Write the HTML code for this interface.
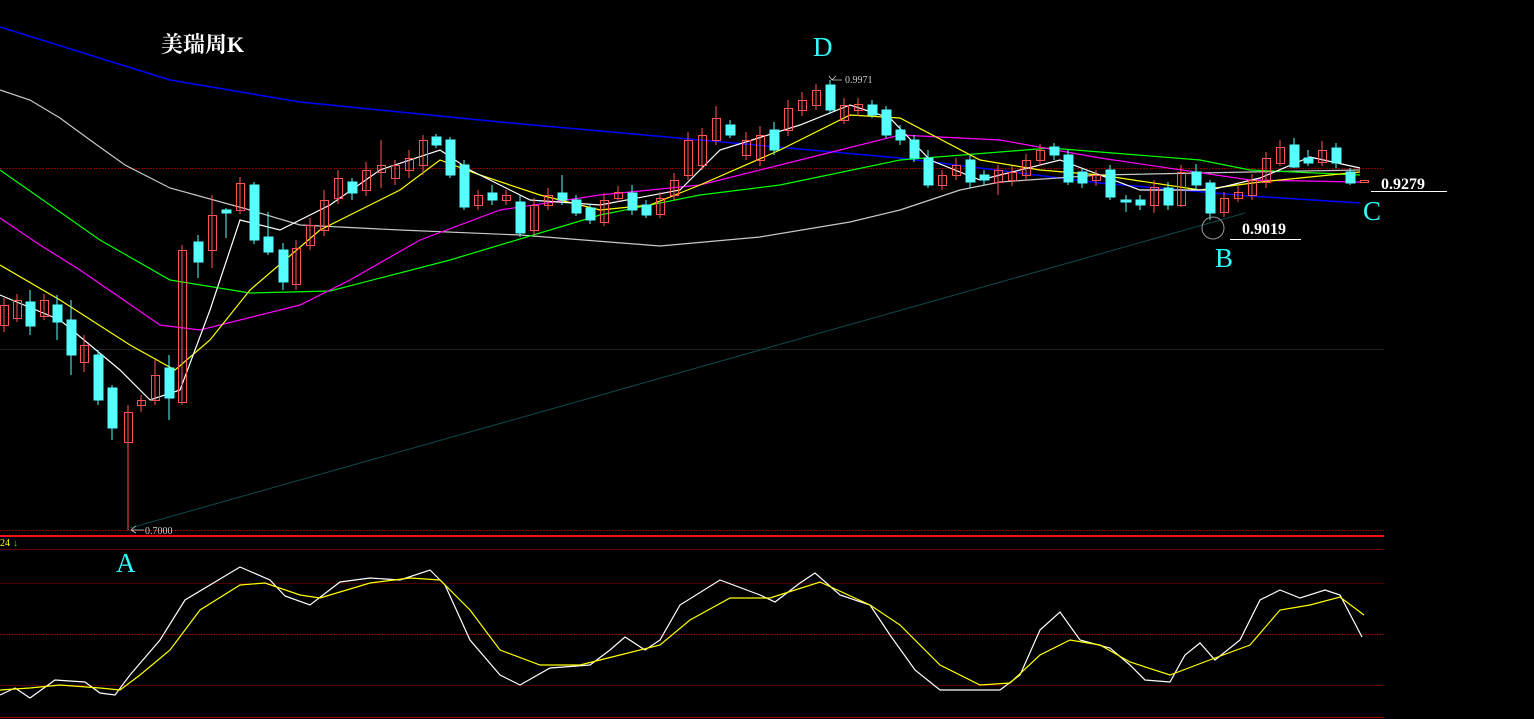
<!DOCTYPE html>
<html><head><meta charset="utf-8"><style>
html,body{margin:0;padding:0;background:#000;width:1534px;height:719px;overflow:hidden}
svg{display:block}
text{font-family:"Liberation Serif","Noto Serif CJK SC",serif}
</style></head><body>
<svg width="1534" height="719" viewBox="0 0 1534 719" xmlns="http://www.w3.org/2000/svg">
<rect width="1534" height="719" fill="#000"/>
<g stroke-width="1" shape-rendering="crispEdges">
<line x1="0" y1="168.5" x2="1384" y2="168.5" stroke="#800000" stroke-dasharray="2 1"/>
<line x1="0" y1="349.5" x2="1384" y2="349.5" stroke="#202020"/>
<line x1="0" y1="530.5" x2="1384" y2="530.5" stroke="#900000" stroke-dasharray="2 1"/>
<line x1="0" y1="536" x2="1384" y2="536" stroke="#ff1010" stroke-width="2"/>
<line x1="0" y1="549.5" x2="1384" y2="549.5" stroke="#600000"/>
<line x1="0" y1="583.5" x2="1384" y2="583.5" stroke="#500000"/>
<line x1="0" y1="634.5" x2="1384" y2="634.5" stroke="#900000" stroke-dasharray="2 1"/>
<line x1="0" y1="685.5" x2="1384" y2="685.5" stroke="#500000"/>
<line x1="0" y1="717.5" x2="1384" y2="717.5" stroke="#a00000"/>
</g>
<line x1="130" y1="528" x2="1245" y2="213" stroke="#0f4848" stroke-width="1"/>
<g fill="none" stroke-width="1.2">
<polyline stroke="#0000ff" stroke-width="1.5" points="0,27 170,80 300,102 500,122 700,140 900,158 1100,183 1250,196 1360,203"/>
<polyline stroke="#c8c8c8" points="0,90 30,100 60,118 90,140 125,165 170,188 250,210 300,225 400,230 520,235 660,246 760,237 850,222 900,210 960,190 1000,182 1100,175 1250,172 1360,170"/>
<polyline stroke="#00ff00" points="0,170 50,205 100,240 170,280 250,293 330,291 450,260 600,215 700,195 780,185 900,160 1050,148 1200,160 1250,170 1360,175"/>
<polyline stroke="#ff00ff" points="0,218 40,245 80,270 160,325 200,330 300,305 350,280 420,240 500,210 600,195 700,185 800,160 900,135 1000,140 1100,158 1250,180 1360,182"/>
<polyline stroke="#ffff00" points="0,265 60,300 130,345 175,370 210,340 250,290 320,230 400,190 440,160 480,175 540,195 600,210 650,205 700,185 780,150 850,115 900,118 980,160 1040,170 1100,175 1200,190 1260,182 1360,172"/>
<polyline stroke="#ffffff" points="0,295 60,320 120,370 150,400 180,390 210,310 240,220 280,230 330,205 380,170 440,150 470,170 530,200 600,205 680,190 720,150 800,125 850,105 890,118 930,160 980,180 1060,160 1140,190 1210,190 1260,178 1310,157 1360,168"/>
</g>
<g stroke-width="1" shape-rendering="crispEdges">
<g stroke="#ff5454" fill="none">
<line x1="4" y1="298" x2="4" y2="332"/><rect x="0.5" y="305.5" width="8" height="20"/>
<line x1="17" y1="294" x2="17" y2="322"/><rect x="13.5" y="300.5" width="8" height="18"/>
<line x1="44" y1="294" x2="44" y2="320"/><rect x="40.5" y="300.5" width="8" height="16"/>
<line x1="84" y1="335" x2="84" y2="372"/><rect x="80.5" y="345.5" width="8" height="17"/>
<line x1="128" y1="405" x2="128" y2="530"/><rect x="124.5" y="412.5" width="8" height="30"/>
<line x1="141" y1="395" x2="141" y2="412"/><rect x="137.5" y="400.5" width="8" height="5"/>
<line x1="155" y1="360" x2="155" y2="405"/><rect x="151.5" y="375.5" width="8" height="25"/>
<line x1="182" y1="245" x2="182" y2="405"/><rect x="178.5" y="250.5" width="8" height="152"/>
<line x1="212" y1="195" x2="212" y2="268"/><rect x="208.5" y="215.5" width="8" height="35"/>
<line x1="240" y1="177" x2="240" y2="214"/><rect x="236.5" y="183.5" width="8" height="27"/>
<line x1="296" y1="240" x2="296" y2="290"/><rect x="292.5" y="248.5" width="8" height="36"/>
<line x1="310" y1="218" x2="310" y2="250"/><rect x="306.5" y="225.5" width="8" height="20"/>
<line x1="324" y1="190" x2="324" y2="236"/><rect x="320.5" y="200.5" width="8" height="30"/>
<line x1="338" y1="170" x2="338" y2="204"/><rect x="334.5" y="178.5" width="8" height="20"/>
<line x1="366" y1="162" x2="366" y2="196"/><rect x="362.5" y="170.5" width="8" height="20"/>
<line x1="381" y1="140" x2="381" y2="188"/><rect x="377.5" y="165.5" width="8" height="7"/>
<line x1="395" y1="160" x2="395" y2="185"/><rect x="391.5" y="165.5" width="8" height="13"/>
<line x1="409" y1="150" x2="409" y2="178"/><rect x="405.5" y="158.5" width="8" height="12"/>
<line x1="423" y1="135" x2="423" y2="175"/><rect x="419.5" y="140.5" width="8" height="25"/>
<line x1="478" y1="190" x2="478" y2="210"/><rect x="474.5" y="195.5" width="8" height="10"/>
<line x1="506" y1="190" x2="506" y2="205"/><rect x="502.5" y="195.5" width="8" height="5"/>
<line x1="534" y1="198" x2="534" y2="235"/><rect x="530.5" y="205.5" width="8" height="25"/>
<line x1="548" y1="188" x2="548" y2="210"/><rect x="544.5" y="195.5" width="8" height="10"/>
<line x1="604" y1="193" x2="604" y2="226"/><rect x="600.5" y="200.5" width="8" height="22"/>
<line x1="618" y1="186" x2="618" y2="202"/><rect x="614.5" y="192.5" width="8" height="6"/>
<line x1="660" y1="192" x2="660" y2="218"/><rect x="656.5" y="198.5" width="8" height="16"/>
<line x1="674" y1="173" x2="674" y2="200"/><rect x="670.5" y="180.5" width="8" height="15"/>
<line x1="688" y1="132" x2="688" y2="180"/><rect x="684.5" y="140.5" width="8" height="35"/>
<line x1="702" y1="128" x2="702" y2="170"/><rect x="698.5" y="135.5" width="8" height="30"/>
<line x1="716" y1="106" x2="716" y2="145"/><rect x="712.5" y="118.5" width="8" height="22"/>
<line x1="746" y1="132" x2="746" y2="160"/><rect x="742.5" y="140.5" width="8" height="15"/>
<line x1="760" y1="126" x2="760" y2="166"/><rect x="756.5" y="135.5" width="8" height="25"/>
<line x1="788" y1="100" x2="788" y2="136"/><rect x="784.5" y="108.5" width="8" height="22"/>
<line x1="802" y1="92" x2="802" y2="116"/><rect x="798.5" y="100.5" width="8" height="10"/>
<line x1="816" y1="84" x2="816" y2="110"/><rect x="812.5" y="90.5" width="8" height="15"/>
<line x1="844" y1="98" x2="844" y2="124"/><rect x="840.5" y="105.5" width="8" height="15"/>
<line x1="858" y1="98" x2="858" y2="116"/><rect x="854.5" y="104.5" width="8" height="6"/>
<line x1="942" y1="170" x2="942" y2="190"/><rect x="938.5" y="175.5" width="8" height="10"/>
<line x1="956" y1="158" x2="956" y2="180"/><rect x="952.5" y="165.5" width="8" height="10"/>
<line x1="998" y1="165" x2="998" y2="195"/><rect x="994.5" y="170.5" width="8" height="12"/>
<line x1="1012" y1="166" x2="1012" y2="186"/><rect x="1008.5" y="172.5" width="8" height="8"/>
<line x1="1026" y1="154" x2="1026" y2="180"/><rect x="1022.5" y="160.5" width="8" height="15"/>
<line x1="1040" y1="144" x2="1040" y2="166"/><rect x="1036.5" y="150.5" width="8" height="10"/>
<line x1="1096" y1="170" x2="1096" y2="186"/><rect x="1092.5" y="175.5" width="8" height="5"/>
<line x1="1154" y1="180" x2="1154" y2="213"/><rect x="1150.5" y="187.5" width="8" height="18"/>
<line x1="1181" y1="165" x2="1181" y2="207"/><rect x="1177.5" y="172.5" width="8" height="33"/>
<line x1="1224" y1="192" x2="1224" y2="217"/><rect x="1220.5" y="198.5" width="8" height="14"/>
<line x1="1238" y1="186" x2="1238" y2="202"/><rect x="1234.5" y="192.5" width="8" height="6"/>
<line x1="1252" y1="174" x2="1252" y2="200"/><rect x="1248.5" y="180.5" width="8" height="15"/>
<line x1="1266" y1="152" x2="1266" y2="188"/><rect x="1262.5" y="158.5" width="8" height="24"/>
<line x1="1280" y1="140" x2="1280" y2="166"/><rect x="1276.5" y="147.5" width="8" height="16"/>
<line x1="1322" y1="141" x2="1322" y2="166"/><rect x="1318.5" y="150.5" width="8" height="12"/>
<rect x="1360.5" y="180.5" width="8" height="2"/>
</g>
<g stroke="#55ffff" fill="#55ffff">
<line x1="30" y1="290" x2="30" y2="335"/><rect x="26" y="302" width="9" height="24"/>
<line x1="57" y1="295" x2="57" y2="340"/><rect x="53" y="305" width="9" height="17"/>
<line x1="71" y1="300" x2="71" y2="375"/><rect x="67" y="320" width="9" height="35"/>
<line x1="98" y1="350" x2="98" y2="405"/><rect x="94" y="355" width="9" height="45"/>
<line x1="112" y1="385" x2="112" y2="440"/><rect x="108" y="388" width="9" height="40"/>
<line x1="169" y1="355" x2="169" y2="420"/><rect x="165" y="368" width="9" height="30"/>
<line x1="198" y1="235" x2="198" y2="278"/><rect x="194" y="242" width="9" height="20"/>
<line x1="226" y1="208" x2="226" y2="238"/><rect x="222" y="210" width="9" height="3"/>
<line x1="254" y1="182" x2="254" y2="244"/><rect x="250" y="185" width="9" height="55"/>
<line x1="268" y1="212" x2="268" y2="255"/><rect x="264" y="237" width="9" height="15"/>
<line x1="283" y1="243" x2="283" y2="290"/><rect x="279" y="250" width="9" height="32"/>
<line x1="352" y1="178" x2="352" y2="200"/><rect x="348" y="182" width="9" height="11"/>
<line x1="436" y1="134" x2="436" y2="148"/><rect x="432" y="137" width="9" height="8"/>
<line x1="450" y1="137" x2="450" y2="178"/><rect x="446" y="140" width="9" height="35"/>
<line x1="464" y1="160" x2="464" y2="210"/><rect x="460" y="165" width="9" height="42"/>
<line x1="492" y1="185" x2="492" y2="205"/><rect x="488" y="193" width="9" height="7"/>
<line x1="520" y1="195" x2="520" y2="237"/><rect x="516" y="202" width="9" height="31"/>
<line x1="562" y1="175" x2="562" y2="205"/><rect x="558" y="193" width="9" height="7"/>
<line x1="576" y1="195" x2="576" y2="216"/><rect x="572" y="200" width="9" height="13"/>
<line x1="590" y1="204" x2="590" y2="224"/><rect x="586" y="208" width="9" height="12"/>
<line x1="632" y1="185" x2="632" y2="215"/><rect x="628" y="193" width="9" height="17"/>
<line x1="646" y1="200" x2="646" y2="218"/><rect x="642" y="205" width="9" height="10"/>
<line x1="730" y1="120" x2="730" y2="138"/><rect x="726" y="125" width="9" height="10"/>
<line x1="774" y1="122" x2="774" y2="155"/><rect x="770" y="130" width="9" height="20"/>
<line x1="830" y1="80" x2="830" y2="114"/><rect x="826" y="85" width="9" height="25"/>
<line x1="872" y1="100" x2="872" y2="118"/><rect x="868" y="105" width="9" height="10"/>
<line x1="886" y1="106" x2="886" y2="138"/><rect x="882" y="110" width="9" height="25"/>
<line x1="900" y1="125" x2="900" y2="145"/><rect x="896" y="130" width="9" height="10"/>
<line x1="914" y1="135" x2="914" y2="162"/><rect x="910" y="140" width="9" height="18"/>
<line x1="928" y1="150" x2="928" y2="188"/><rect x="924" y="158" width="9" height="27"/>
<line x1="970" y1="155" x2="970" y2="188"/><rect x="966" y="160" width="9" height="22"/>
<line x1="984" y1="170" x2="984" y2="185"/><rect x="980" y="175" width="9" height="5"/>
<line x1="1054" y1="143" x2="1054" y2="160"/><rect x="1050" y="147" width="9" height="8"/>
<line x1="1068" y1="150" x2="1068" y2="185"/><rect x="1064" y="155" width="9" height="27"/>
<line x1="1082" y1="168" x2="1082" y2="188"/><rect x="1078" y="172" width="9" height="11"/>
<line x1="1110" y1="165" x2="1110" y2="200"/><rect x="1106" y="170" width="9" height="27"/>
<line x1="1126" y1="195" x2="1126" y2="212"/><rect x="1121" y="200" width="10" height="2"/>
<line x1="1140" y1="195" x2="1140" y2="210"/><rect x="1136" y="200" width="9" height="5"/>
<line x1="1168" y1="182" x2="1168" y2="210"/><rect x="1164" y="188" width="9" height="17"/>
<line x1="1196" y1="164" x2="1196" y2="190"/><rect x="1192" y="172" width="9" height="13"/>
<line x1="1210" y1="180" x2="1210" y2="220"/><rect x="1206" y="183" width="9" height="30"/>
<line x1="1294" y1="138" x2="1294" y2="168"/><rect x="1290" y="145" width="9" height="22"/>
<line x1="1308" y1="150" x2="1308" y2="166"/><rect x="1304" y="158" width="9" height="5"/>
<line x1="1336" y1="143" x2="1336" y2="168"/><rect x="1332" y="148" width="9" height="15"/>
<line x1="1350" y1="168" x2="1350" y2="185"/><rect x="1346" y="172" width="9" height="11"/>
</g>
</g>
<g fill="none" stroke-width="1.2">
<polyline stroke="#ffffff" points="0,695 15,688 30,698 55,680 85,682 100,693 115,695 130,675 160,640 185,600 240,567 270,580 285,596 310,605 340,582 370,578 400,580 430,570 445,585 470,640 500,675 520,685 550,668 590,665 610,650 625,637 645,650 660,640 680,605 720,580 760,595 775,602 800,583 815,573 840,595 870,605 890,635 915,670 940,690 1000,690 1020,675 1040,630 1060,612 1080,640 1110,648 1130,665 1145,680 1170,682 1185,655 1200,643 1215,660 1240,640 1260,600 1280,590 1300,598 1325,590 1340,595 1362,637"/>
<polyline stroke="#ffff00" points="0,690 30,688 60,685 100,688 120,690 140,675 170,650 200,610 240,585 265,583 300,595 320,598 370,583 410,578 440,580 470,610 500,650 540,665 580,665 620,655 660,645 690,620 730,598 770,598 820,582 870,605 900,625 940,665 980,685 1010,683 1040,655 1070,640 1100,645 1130,662 1170,675 1215,658 1250,645 1280,610 1310,605 1340,597 1364,615"/>
</g>
<text x="161" y="52" fill="#fff" font-size="22" font-weight="bold">美瑞周K</text>
<text x="813" y="56" fill="#33ffff" font-size="27">D</text>
<text x="116" y="572" fill="#33ffff" font-size="27">A</text>
<text x="1215" y="267" fill="#33ffff" font-size="27">B</text>
<text x="1363" y="220" fill="#33ffff" font-size="27">C</text>
<text x="1381" y="189" fill="#fff" font-size="16" font-weight="bold" font-family="'Liberation Mono',monospace">0.9279</text>
<line x1="1371" y1="191.5" x2="1447" y2="191.5" stroke="#fff"/>
<text x="1242" y="234" fill="#fff" font-size="16" font-weight="bold" font-family="'Liberation Mono',monospace">0.9019</text>
<line x1="1230" y1="239.5" x2="1301" y2="239.5" stroke="#fff"/>
<circle cx="1213" cy="228" r="11" fill="none" stroke="#999"/>
<path d="M832 80 L829 76 M832 80 L836 76 M832 80 L842 80" stroke="#ccc" fill="none" stroke-width="0.8"/>
<text x="845" y="83" fill="#ccc" font-size="10" font-family="'Liberation Sans',sans-serif">0.9971</text>
<path d="M131 530 L136 526 M131 530 L136 533 M131 530 L144 530" stroke="#ccc" fill="none" stroke-width="0.8"/>
<text x="145" y="534" fill="#ccc" font-size="10" font-family="'Liberation Sans',sans-serif">0.7000</text>
<text x="0" y="546" fill="#ffff00" font-size="10" font-family="'Liberation Sans',sans-serif">24</text>
<text x="13" y="546" fill="#00ff00" font-size="10" font-family="'Liberation Sans',sans-serif">↓</text>
</svg>
</body></html>
